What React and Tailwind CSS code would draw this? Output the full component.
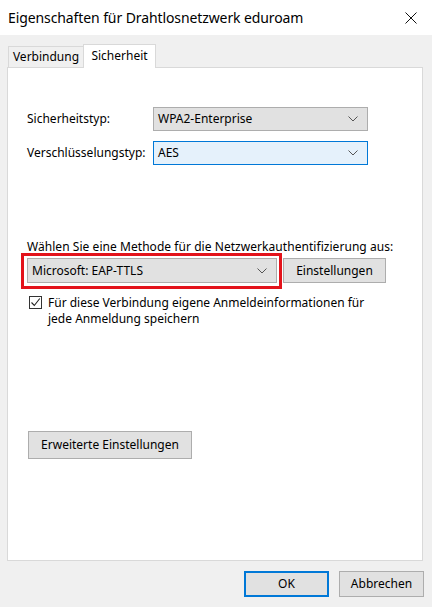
import React from "react";

const font = { fontFamily: '"Noto Sans", "Segoe UI", sans-serif' };

function Chevron() {
  return (
    <svg width="10" height="6" viewBox="0 0 10 6" className="shrink-0">
      <path d="M0.5 0.5 L5 5 L9.5 0.5" fill="none" stroke="#555" strokeWidth="1" />
    </svg>
  );
}

function Select({ value, className = "" }) {
  return (
    <div className={`flex items-center justify-between pl-[4px] pr-[9px] text-[12px] text-black ${className}`}>
      <span>{value}</span>
      <Chevron />
    </div>
  );
}

export default function App() {
  return (
    <div className="w-[432px] h-[607px] bg-[#f0f0f0] flex flex-col text-[12px] text-black" style={font}>
      <div className="h-[35px] bg-white flex items-center justify-between pl-[8px] pr-[15px] shrink-0">
        <span className="text-[14px] tracking-[-0.1px] text-black">Eigenschaften für Drahtlosnetzwerk eduroam</span>
        <svg width="12" height="12" viewBox="0 0 12 12">
          <path d="M0.5 0.5 L11.5 11.5 M11.5 0.5 L0.5 11.5" stroke="#111" strokeWidth="1" />
        </svg>
      </div>
      <div className="px-[7px] pt-[9px] flex flex-col">
        <div className="flex items-end h-[24px] relative z-10 pl-[1px]">
          <div className="h-[21px] w-[76px] border border-b-0 border-[#d9d9d9] bg-[#f0f0f0] flex items-center justify-center mb-[1px]">
            Verbindung
          </div>
          <div className="h-[24px] w-[73px] border border-b-0 border-[#d9d9d9] bg-white flex items-start pt-[2px] justify-center -ml-[1px]">
            Sicherheit
          </div>
        </div>
        <div className="w-[416px] h-[494px] -mt-[1px] border border-[#d9d9d9] bg-white flex flex-col pl-[19px]">
          <div className="mt-[39px] flex items-center">
            <span className="w-[126px]">Sicherheitstyp:</span>
            <Select value="WPA2-Enterprise" className="w-[215px] h-[24px] bg-[#e1e1e1] border border-[#adadad]" />
          </div>
          <div className="mt-[10px] flex items-center">
            <span className="w-[126px]">Verschlüsselungstyp:</span>
            <Select value="AES" className="w-[215px] h-[24px] bg-[#e5f1fb] border border-[#0078d7]" />
          </div>
          <div className="mt-[74px] leading-[16px] tracking-[0.05px]">Wählen Sie eine Methode für die Netzwerkauthentifizierung aus:</div>
          <div className="mt-[-2px] flex items-center -ml-[6px]">
            <div className="border-[3px] border-[#e3131b] pl-[3px] pr-[2px] pt-[2px] pb-[3px]">
              <Select value="Microsoft: EAP-TTLS" className="w-[250px] h-[25px] bg-[#e1e1e1] border border-[#adadad]" />
            </div>
            <div className="w-[103px] h-[25px] bg-[#e1e1e1] border border-[#adadad] flex items-center justify-center ml-[1px] -mt-[1px]">
              Einstellungen
            </div>
          </div>
          <div className="mt-[6px] flex items-start ml-[2px]">
            <div className="w-[13px] h-[13px] border border-[#333] bg-white flex items-center justify-center shrink-0 mt-[1px]">
              <svg width="11" height="11" viewBox="0 0 11 11">
                <path d="M1.5 5.5 L4.3 8.5 L9.8 1.5" fill="none" stroke="#222" strokeWidth="1.1" />
              </svg>
            </div>
            <div className="ml-[6px] leading-[16px] w-[320px]">
              Für diese Verbindung eigene Anmeldeinformationen für jede Anmeldung speichern
            </div>
          </div>
          <div className="mt-[104px] ml-[1px] w-[164px] h-[28px] bg-[#e1e1e1] border border-[#adadad] flex items-center justify-center">
            Erweiterte Einstellungen
          </div>
        </div>
        <div className="mt-[10px] flex justify-end pr-[1px] gap-[10px]">
          <div className="w-[85px] h-[26px] bg-[#e1e1e1] border-2 border-[#0078d7] flex items-center justify-center">OK</div>
          <div className="w-[85px] h-[26px] bg-[#e1e1e1] border border-[#adadad] flex items-center justify-center">Abbrechen</div>
        </div>
      </div>
    </div>
  );
}
